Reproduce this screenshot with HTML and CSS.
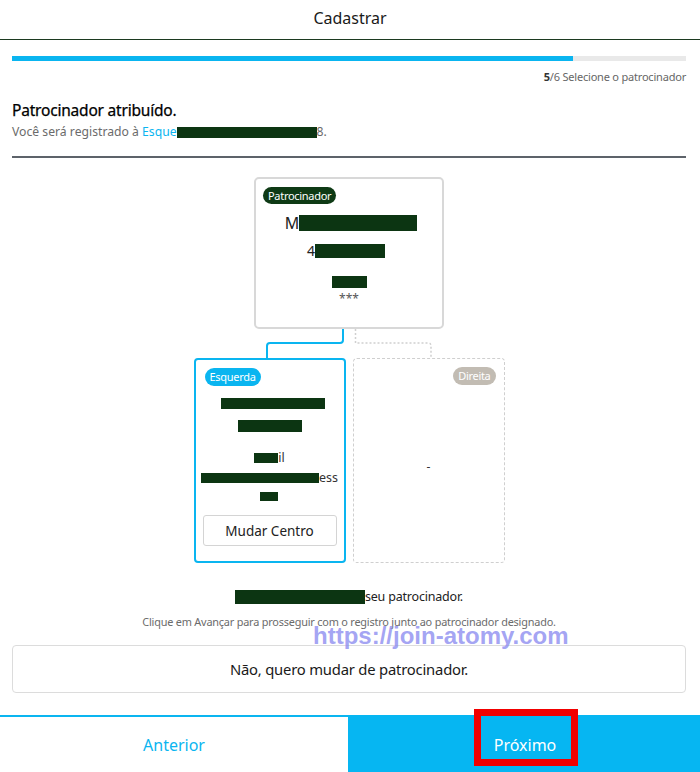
FILE: index.html
```html
<!DOCTYPE html>
<html lang="pt">
<head>
<meta charset="utf-8">
<title>Cadastrar</title>
<link rel="stylesheet" href="styles.css">
</head>
<body>
<div class="page">
  <header class="header">Cadastrar</header>
  <main class="content">
    <div class="progress"><div class="progress-fill" style="width: 83.2%"></div></div>
    <div class="step"><b>5</b>/6&nbsp;Selecione o patrocinador</div>
    <h1 class="title">Patrocinador atribuído.</h1>
    <p class="sub">Você será registrado à <span class="link">Esque</span><span class="redact r-sub"></span>8.</p>
    <hr class="rule">

    <section class="tree">
      <div class="sponsor card">
        <span class="badge badge-dark">Patrocinador</span>
        <div class="s-name">M<span class="redact r-name"></span></div>
        <div class="s-line2">4<span class="redact r-id"></span></div>
        <div class="s-line3"><span class="redact r-cty"></span></div>
        <div class="s-stars">***</div>
      </div>
      <div class="links">
        <svg width="311" height="29" viewBox="0 0 311 29">
          <path d="M149 0 V11 Q149 14 146 14 H76 Q73 14 73 17 V29" fill="none" stroke="#0ab5f0" stroke-width="2"/>
          <path d="M161.5 0 V14 H234 Q237 14 237 17 V29" fill="none" stroke="#d0d0d0" stroke-width="1.5" stroke-dasharray="2 2"/>
        </svg>
      </div>
      <div class="children">
        <div class="child child-left">
          <span class="badge badge-blue">Esquerda</span>
          <div class="c-l1"><span class="redact r-l1"></span></div>
          <div class="c-l2"><span class="redact r-l2"></span></div>
          <div class="c-l3"><span class="redact r-l3"></span>il</div>
          <div class="c-l4"><span class="redact r-l4"></span>ess</div>
          <div class="c-l5"><span class="redact r-l5"></span></div>
          <button class="btn-center">Mudar Centro</button>
        </div>
        <div class="child child-right">
          <span class="badge badge-gray">Direita</span>
          <div class="empty">-</div>
        </div>
      </div>
    </section>

    <p class="confirm"><span class="redact r-conf"></span>seu patrocinador.</p>
    <div class="hint-wrap">
      <p class="hint">Clique em Avançar para prosseguir com o registro junto ao patrocinador designado.</p>
      <span class="watermark">https://join-atomy.com</span>
    </div>
    <button class="btn-change">Não, quero mudar de patrocinador.</button>
  </main>
  <footer class="footer">
    <button class="f-btn f-prev">Anterior</button>
    <button class="f-btn f-next"><span class="f-label">Próximo</span><span class="highlight"></span></button>
  </footer>
</div>
</body>
</html>
```
FILE: styles.css
```css
* { box-sizing: border-box; }
html, body { margin: 0; padding: 0; background: #fff; }
body {
  font-family: "Noto Sans", "Open Sans", sans-serif;
  color: #222;
  width: 700px;
  height: 772px;
  overflow: hidden;
}
.page { display: flex; flex-direction: column; height: 772px; }

.header {
  height: 40px;
  line-height: 36px;
  text-align: center;
  font-size: 16px;
  color: #1a1a1a;
  border-bottom: 1px solid #1c3a20;
}

.content { padding: 0 14px 0 12px; }

.progress {
  margin-top: 16px;
  height: 5px;
  background: #e9e9e9;
}
.progress-fill { height: 100%; background: #0ab5f0; }

.step {
  margin-top: 8px;
  text-align: right;
  font-size: 11px;
  line-height: 16px;
  color: #666;
  letter-spacing: -0.2px;
}
.step b { color: #333; font-weight: 700; }

.title {
  margin: 15px 0 0;
  font-size: 15.5px;
  line-height: 20px;
  font-weight: 400;
  color: #000;
  letter-spacing: -0.2px;
  -webkit-text-stroke: 0.25px #000;
}
.sub {
  margin: 3px 0 0;
  font-size: 12.2px;
  line-height: 18px;
  color: #6b6b6b;
}
.link { color: #0ab5f0; }

.redact {
  display: inline-block;
  background: #0c3512;
  vertical-align: middle;
}
.r-sub { width: 140px; height: 11px; }

.rule {
  margin: 15px 0 0;
  border: 0;
  height: 2px;
  background: #5d636a;
}

.tree {
  display: flex;
  flex-direction: column;
  align-items: center;
  margin-top: 19px;
}

.card {
  border: 2px solid #d8d8d8;
  border-radius: 5px;
}
.sponsor {
  width: 190px;
  height: 152px;
  padding: 8px 7px 0;
  display: flex;
  flex-direction: column;
  align-items: center;
  text-align: center;
}
.sponsor .badge { align-self: flex-start; }

.badge {
  display: inline-block;
  height: 18px;
  line-height: 18px;
  padding: 0 5px;
  border-radius: 9px;
  font-size: 11px;
  color: #fff;
  letter-spacing: -0.3px;
}
.badge-dark { background: #0e3a15; height: 17px; line-height: 17px; }
.badge-blue { background: #0ab5f0; }
.badge-gray { background: #c2bcb3; }

.s-name {
  margin-top: 8px;
  font-size: 16px;
  line-height: 22px;
  color: #222;
  display: flex;
  align-items: center;
  padding-left: 4px;
}
.r-name { width: 118px; height: 16px; }
.s-line2 {
  margin-top: 7px;
  font-size: 14px;
  line-height: 20px;
  display: flex;
  align-items: center;
  padding-right: 6px;
}
.r-id { width: 70px; height: 14px; }
.s-line3 { margin-top: 15px; line-height: 20px; display: flex; align-items: center; }
.r-cty { width: 35px; height: 12px; }
.s-stars { margin-top: 3px; font-size: 12px; line-height: 16px; color: #555; }

.links { height: 29px; width: 311px; }
.links svg { display: block; }

.children {
  display: flex;
  gap: 7px;
  width: 311px;
}
.child {
  width: 152px;
  height: 205px;
  border-radius: 4px;
  padding: 8px 7px 0;
  display: flex;
  flex-direction: column;
  align-items: center;
  text-align: center;
  font-size: 12.5px;
  color: #333;
}
.child-left { border: 2px solid #0ab5f0; }
.child-left .badge { align-self: flex-start; margin-left: 2px; }
.child-right { border: 1.5px dashed #cfcfcf; }
.child-right .badge { align-self: flex-end; margin-right: 1px; }

.c-l1 { margin-top: 7px; height: 20px; display: flex; align-items: center; padding-left: 6px; }
.r-l1 { width: 104px; height: 11px; }
.c-l2 { margin-top: 3px; height: 20px; display: flex; align-items: center; }
.r-l2 { width: 64px; height: 12px; }
.c-l3 { margin-top: 13px; height: 18px; display: flex; align-items: center; line-height: 18px; }
.r-l3 { width: 24px; height: 10px; }
.c-l4 { margin-top: 2px; height: 18px; display: flex; align-items: center; line-height: 18px; }
.r-l4 { width: 118px; height: 10px; }
.c-l5 { height: 18px; display: flex; align-items: center; padding-right: 2px; }
.r-l5 { width: 18px; height: 9px; }

.btn-center {
  margin-top: 10px;
  width: 134px;
  height: 31px;
  border: 1px solid #d4d4d4;
  border-radius: 3px;
  background: #fff;
  font-family: inherit;
  font-size: 13.5px;
  color: #222;
  padding: 0;
}

.empty {
  margin-top: 73px;
  font-size: 12px;
  color: #333;
}

.confirm {
  margin: 26px 0 0;
  text-align: center;
  font-size: 12.5px;
  line-height: 16px;
  color: #222;
  display: flex;
  justify-content: center;
  align-items: center;
  letter-spacing: -0.2px;
}
.r-conf { width: 130px; height: 14px; }

.hint-wrap { position: relative; }
.hint {
  margin: 9px 0 0;
  text-align: center;
  font-size: 10.9px;
  line-height: 16px;
  color: #6b6b6b;
  letter-spacing: -0.2px;
}
.watermark {
  position: absolute;
  left: 301px;
  top: 8px;
  font-family: "Liberation Sans", Arial, sans-serif;
  font-weight: 700;
  font-size: 24px;
  line-height: 28px;
  color: rgba(140, 140, 240, 0.8);
  white-space: nowrap;
  z-index: 2;
}

.btn-change {
  display: block;
  width: 100%;
  margin-top: 15px;
  height: 48px;
  border: 1px solid #dcdcdc;
  border-radius: 4px;
  background: #fff;
  font-family: inherit;
  font-size: 14.8px;
  color: #1a1a1a;
  letter-spacing: -0.2px;
}

.footer {
  margin-top: 22px;
  display: flex;
  height: 57px;
}
.f-btn {
  border: 0;
  padding: 0;
  font-family: inherit;
  font-size: 16px;
  position: relative;
}
.f-prev {
  width: 348px;
  background: #fff;
  color: #0ab5f0;
  border-top: 2px solid #0ab5f0;
}
.f-next {
  flex: 1;
  background: #06b6f2;
  color: #fff;
}
.f-label { position: relative; left: 1px; top: 1px; }
.highlight {
  position: absolute;
  left: 126px;
  top: -6px;
  width: 104px;
  height: 57px;
  border: 7px solid #f20000;
}
```
